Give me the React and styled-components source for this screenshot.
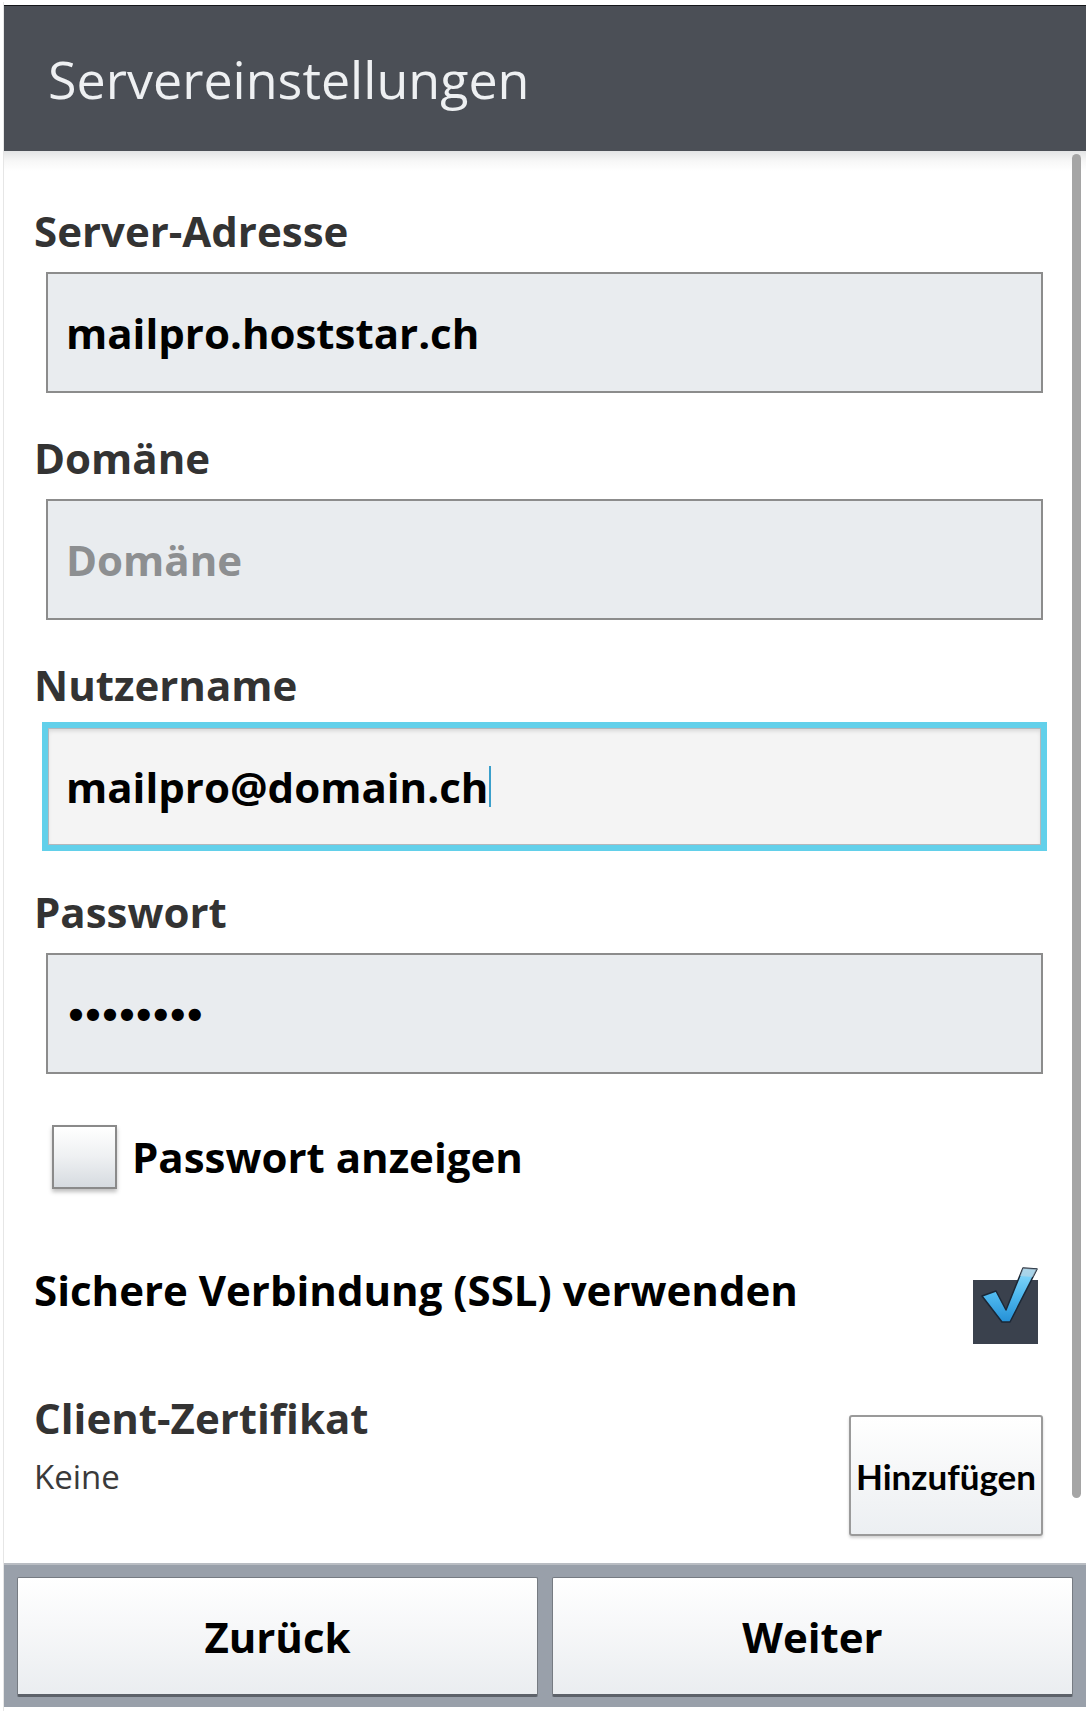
import React from "react";
import styled, { createGlobalStyle, css } from "styled-components";

const GlobalStyle = createGlobalStyle`
  html, body { margin: 0; padding: 0; background: #ffffff; }
  body { font-family: "Open Sans", "Noto Sans", sans-serif; }
  * { box-sizing: border-box; }
`;

const Screen = styled.div`
  position: relative;
  width: 1082px;
  margin-left: 4px;
  padding-top: 5px;
  height: 1713px;
  background: #ffffff;
  box-shadow: -3px 0 0 -2px #e6e6e6;
`;

const Header = styled.header`
  height: 146px;
  border-top: 1px solid #15171a;
  background: #4b4f56;
  padding: 47px 0 0 44px;
`;

const Title = styled.h1`
  margin: 0;
  font-family: "Open Sans", sans-serif;
  font-weight: 400;
  font-size: 52px;
  line-height: 52px;
  color: #eef0f2;
  letter-spacing: 0;
`;

const Content = styled.main`
  height: 1412px;
  padding: 59px 0 0 30px;
  background: linear-gradient(to bottom, #e3e4e5 0px, #f7f7f7 10px, #ffffff 20px);
  display: flex;
  flex-direction: column;
`;

const Field = styled.div`
  display: flex;
  flex-direction: column;
  margin-bottom: 44px;
`;

const Label = styled.label`
  font-family: "Open Sans", sans-serif;
  font-weight: 700;
  font-size: 42px;
  line-height: 42px;
  color: #333333;
  margin-bottom: 20px;
`;

const Input = styled.div`
  display: flex;
  align-items: center;
  height: 121px;
  margin: 0 43px 0 12px;
  padding-left: 18px;
  border: 2px solid #8c8c8c;
  background: #e9ecef;
  font-family: "Open Sans", sans-serif;
  font-weight: 700;
  font-size: 42px;
  line-height: 42px;
  color: ${(p) => (p.$placeholder ? "#8d8f91" : "#000000")};
  ${(p) =>
    p.$focused &&
    css`
      background: #f4f4f4;
      border-color: #62d0ea;
      box-shadow: 0 0 0 4px #62d0ea, inset 0 0 0 1px #b4b8bc, inset 0 3px 4px rgba(0, 0, 0, 0.12);
    `}
`;

const Caret = styled.span`
  display: inline-block;
  width: 2px;
  height: 41px;
  margin-left: 1px;
  background: #3a9fcb;
  align-self: center;
`;

const Dots = styled.span`
  font-family: "DejaVu Sans", sans-serif;
  font-size: 16px;
  line-height: 24px;
  letter-spacing: 3px;
  color: #000000;
  margin-left: 3px;
`;

const CheckRow = styled.div`
  display: flex;
  align-items: center;
  margin-top: 7px;
  margin-left: 18px;
`;

const Box = styled.span`
  display: block;
  width: 65px;
  height: 64px;
  border: 2px solid #8a8a8a;
  background: linear-gradient(to bottom, #ffffff 0%, #eef0f2 50%, #d6dbe0 100%);
  box-shadow: 0 3px 4px rgba(0, 0, 0, 0.25);
`;

const CheckText = styled.span`
  margin-left: 15px;
  font-family: "Open Sans", sans-serif;
  font-weight: 700;
  font-size: 42px;
  line-height: 42px;
  color: #000000;
`;

const SslRow = styled.div`
  display: flex;
  justify-content: space-between;
  align-items: flex-start;
  margin-top: 80px;
  margin-right: 48px;
`;

const SslText = styled.span`
  font-family: "Open Sans", sans-serif;
  font-weight: 700;
  font-size: 42px;
  line-height: 42px;
  color: #000000;
`;

const CheckedBox = styled.span`
  position: relative;
  display: block;
  width: 65px;
  height: 64px;
  margin-top: 11px;
  background: #3a414d;
`;

const CheckMark = styled.svg`
  position: absolute;
  left: 0;
  top: -16px;
  width: 72px;
  height: 80px;
  overflow: visible;
`;

const CertRow = styled.div`
  display: flex;
  justify-content: space-between;
  align-items: flex-start;
  margin-top: 53px;
  margin-right: 43px;
`;

const CertInfo = styled.div`
  display: flex;
  flex-direction: column;
`;

const CertTitle = styled.span`
  font-family: "Open Sans", sans-serif;
  font-weight: 700;
  font-size: 42px;
  line-height: 42px;
  color: #333333;
`;

const CertValue = styled.span`
  margin-top: 18px;
  font-family: "Open Sans", sans-serif;
  font-weight: 400;
  font-size: 33px;
  line-height: 40px;
  color: #3a3a3a;
`;

const AddButton = styled.button`
  width: 194px;
  height: 121px;
  margin-top: 18px;
  padding: 0;
  border: 2px solid #9a9a9a;
  border-radius: 3px;
  background: linear-gradient(to bottom, #ffffff 0%, #f6f7f8 45%, #eceff2 100%);
  box-shadow: 0 2px 3px rgba(0, 0, 0, 0.18);
  font-family: Lato, "Open Sans", sans-serif;
  font-weight: 700;
  font-size: 35px;
  color: #000000;
  white-space: nowrap;
`;

const Scrollbar = styled.div`
  position: absolute;
  left: 1068px;
  top: 154px;
  width: 9px;
  height: 1344px;
  border-radius: 5px;
  background: #a5a5a5;
`;

const BottomBar = styled.footer`
  display: flex;
  gap: 14px;
  height: 144px;
  padding: 12px 13px 10px 13px;
  border-top: 2px solid #b9bdc3;
  background: #99a0aa;
`;

const NavButton = styled.button`
  flex: 1;
  height: 120px;
  padding: 0;
  border: 1px solid #767b82;
  border-bottom: 3px solid #5c6169;
  border-radius: 2px;
  background: linear-gradient(to bottom, #ffffff 0%, #f7f8f9 40%, #eaedf0 100%);
  font-family: "Open Sans", sans-serif;
  font-weight: 700;
  font-size: 42px;
  color: #000000;
`;

export default function App() {
  return (
    <>
      <GlobalStyle />
      <Screen>
        <Header>
          <Title>Servereinstellungen</Title>
        </Header>
        <Content>
          <Field>
            <Label>Server-Adresse</Label>
            <Input>mailpro.hoststar.ch</Input>
          </Field>
          <Field>
            <Label>Domäne</Label>
            <Input $placeholder>Domäne</Input>
          </Field>
          <Field>
            <Label>Nutzername</Label>
            <Input $focused>
              mailpro@domain.ch
              <Caret />
            </Input>
          </Field>
          <Field>
            <Label>Passwort</Label>
            <Input>
              <Dots>●●●●●●●●</Dots>
            </Input>
          </Field>
          <CheckRow>
            <Box />
            <CheckText>Passwort anzeigen</CheckText>
          </CheckRow>
          <SslRow>
            <SslText>Sichere Verbindung (SSL) verwenden</SslText>
            <CheckedBox>
              <CheckMark viewBox="0 -16 72 80">
                <defs>
                  <linearGradient id="chk" x1="0" y1="0" x2="0" y2="1">
                    <stop offset="0" stopColor="#8fdcfb" />
                    <stop offset="0.5" stopColor="#4fb9ef" />
                    <stop offset="1" stopColor="#2590d6" />
                  </linearGradient>
                </defs>
                <polygon
                  points="9,16 23,11 33,30 50,-12 64,-11 37,42 29,42"
                  fill="url(#chk)"
                  stroke="#1b2736"
                  strokeWidth="1.5"
                  strokeLinejoin="round"
                />
                <polygon points="50,-12 64,-11 60,-3 47,-4" fill="#c9d3dc" opacity="0.55" />
              </CheckMark>
            </CheckedBox>
          </SslRow>
          <CertRow>
            <CertInfo>
              <CertTitle>Client-Zertifikat</CertTitle>
              <CertValue>Keine</CertValue>
            </CertInfo>
            <AddButton>Hinzufügen</AddButton>
          </CertRow>
        </Content>
        <BottomBar>
          <NavButton>Zurück</NavButton>
          <NavButton>Weiter</NavButton>
        </BottomBar>
        <Scrollbar />
      </Screen>
    </>
  );
}
